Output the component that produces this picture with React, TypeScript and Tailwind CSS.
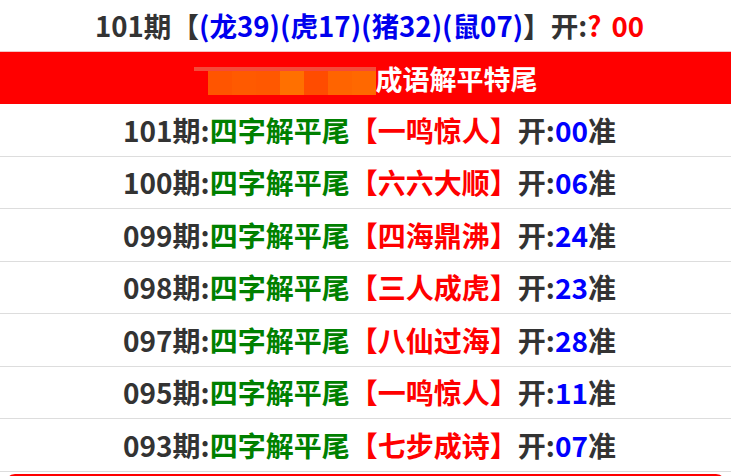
import React from "react";

const rows = [
  { q: "101", idiom: "一鸣惊人", n: "00" },
  { q: "100", idiom: "六六大顺", n: "06" },
  { q: "099", idiom: "四海鼎沸", n: "24" },
  { q: "098", idiom: "三人成虎", n: "23" },
  { q: "097", idiom: "八仙过海", n: "28" },
  { q: "095", idiom: "一鸣惊人", n: "11" },
  { q: "093", idiom: "七步成诗", n: "07" },
];

const mosaic = ["#ff5500", "#ff5a00", "#ff5800", "#ff7000", "#ff4c00", "#ff6400", "#ff6800"];

export default function App() {
  return (
    <div
      className="w-[731px] bg-white font-bold"
      style={{ fontFamily: '"Noto Sans CJK SC", sans-serif' }}
    >
      <div className="h-[51px] pl-[8px] flex items-center justify-center text-[27.6px] text-[#333] whitespace-nowrap">
        <span>101期【</span>
        <span className="text-[#0000ee]">(龙39)(虎17)(猪32)(鼠07)</span>
        <span>】开:</span>
        <span className="text-[#ff0000]">?</span>
        <span className="text-[#ff0000] ml-[10px]">00</span>
      </div>
      <div className="border-t border-[#f3c4c4] h-[53px] bg-[#ff0000] flex items-center justify-center">
        <div className="relative w-[182px] h-[28px] mt-[6px]">
          <div className="absolute left-0 top-0 w-[182px] h-[4px] bg-[#f44a3a]" />
          <div className="absolute left-[14px] top-[4px] flex h-[24px]">
            {mosaic.map((c, i) => (
              <div key={i} className="w-[24px] h-[24px]" style={{ backgroundColor: c }} />
            ))}
          </div>
        </div>
        <span className="text-white text-[27px] leading-none">成语解平特尾</span>
      </div>
      {rows.map((r, i) => (
        <div
          key={i}
          className="h-[52.5px] pl-[8px] border-b border-[#dddddd] flex items-center justify-center text-[28px] text-[#333] whitespace-nowrap"
        >
          <span>{r.q}期:</span>
          <span className="text-[#008000]">四字解平尾</span>
          <span className="text-[#ff0000]">【{r.idiom}】</span>
          <span>开:</span>
          <span className="text-[#0000ff]">{r.n}</span>
          <span>准</span>
        </div>
      ))}
      <div className="mt-[2px] mx-[5px] h-[40px] rounded-t-[10px] bg-[#ff0000]" />
    </div>
  );
}
